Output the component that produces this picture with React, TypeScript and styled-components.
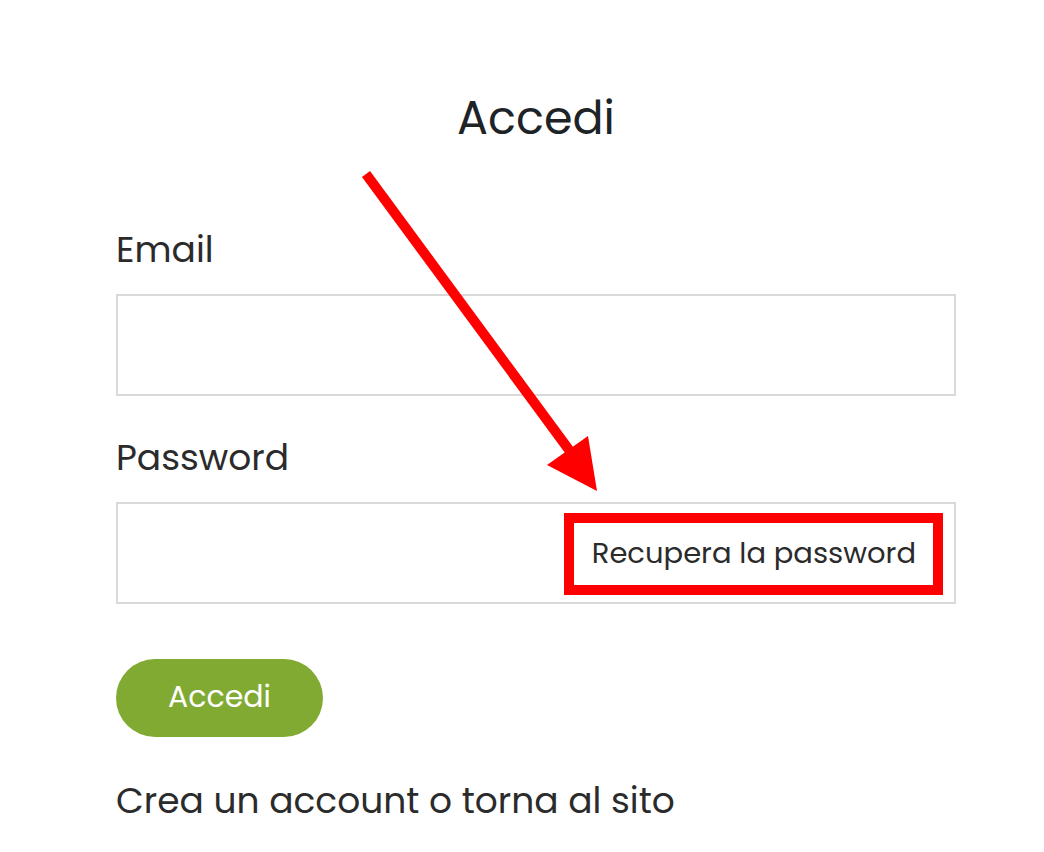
import React from 'react';
import styled, { createGlobalStyle } from 'styled-components';

const GlobalStyle = createGlobalStyle`
  html, body {
    margin: 0;
    padding: 0;
    background: #ffffff;
  }
  body {
    font-family: 'Poppins', 'Open Sans', 'Noto Sans', sans-serif;
    color: #2b2b2b;
  }
`;

const StyledPage = styled.div`
  position: relative;
  width: 1044px;
  height: 852px;
  overflow: hidden;
`;

const StyledForm = styled.form`
  display: flex;
  flex-direction: column;
  width: 840px;
  margin-left: 116px;
  padding-top: 88px;
`;

const StyledTitle = styled.h1`
  margin: 0 0 80px;
  text-align: center;
  font-size: 46px;
  font-weight: 400;
  line-height: 60px;
  color: #1d2327;
`;

const StyledField = styled.div`
  display: flex;
  flex-direction: column;
  margin-bottom: ${({ $gap }: { $gap: number }) => $gap}px;
`;

const StyledLabel = styled.label`
  font-size: 36px;
  line-height: 44px;
  margin-bottom: 22px;
  color: #2b2b2b;
`;

const StyledInputBox = styled.div`
  display: flex;
  align-items: center;
  justify-content: flex-end;
  box-sizing: border-box;
  height: 102px;
  border: 2px solid #d9d9d9;
  padding: 9px 11px 7px;
`;

const StyledHighlight = styled.a`
  display: flex;
  align-items: center;
  box-sizing: border-box;
  height: 82px;
  padding: 0 17px 2px 18px;
  border: 10px solid #ff0000;
  font-size: 29px;
  color: #2b2b2b;
  text-decoration: none;
  white-space: nowrap;
`;

const StyledButton = styled.button`
  align-self: flex-start;
  width: 207px;
  height: 78px;
  border: none;
  border-radius: 39px;
  background: #80aa31;
  color: #ffffff;
  font-family: inherit;
  font-size: 30px;
  padding: 0 0 2px;
  margin-bottom: 38px;
`;

const StyledFooter = styled.p`
  margin: 0;
  font-size: 36px;
  line-height: 52px;
  color: #2b2b2b;
`;

const StyledOverlay = styled.svg`
  position: absolute;
  left: 0;
  top: 0;
  pointer-events: none;
`;

export default function App() {
  return (
    <StyledPage>
      <GlobalStyle />
      <StyledForm onSubmit={(e) => e.preventDefault()}>
        <StyledTitle>Accedi</StyledTitle>
        <StyledField $gap={40}>
          <StyledLabel>Email</StyledLabel>
          <StyledInputBox />
        </StyledField>
        <StyledField $gap={55}>
          <StyledLabel>Password</StyledLabel>
          <StyledInputBox>
            <StyledHighlight href="#">Recupera la password</StyledHighlight>
          </StyledInputBox>
        </StyledField>
        <StyledButton type="submit">Accedi</StyledButton>
        <StyledFooter>Crea un account o torna al sito</StyledFooter>
      </StyledForm>
      <StyledOverlay width="1044" height="852" viewBox="0 0 1044 852">
        <line x1="366" y1="174" x2="575" y2="458" stroke="#ff0000" strokeWidth="10" />
        <polygon points="547,465 588,436 597,491" fill="#ff0000" />
      </StyledOverlay>
    </StyledPage>
  );
}
